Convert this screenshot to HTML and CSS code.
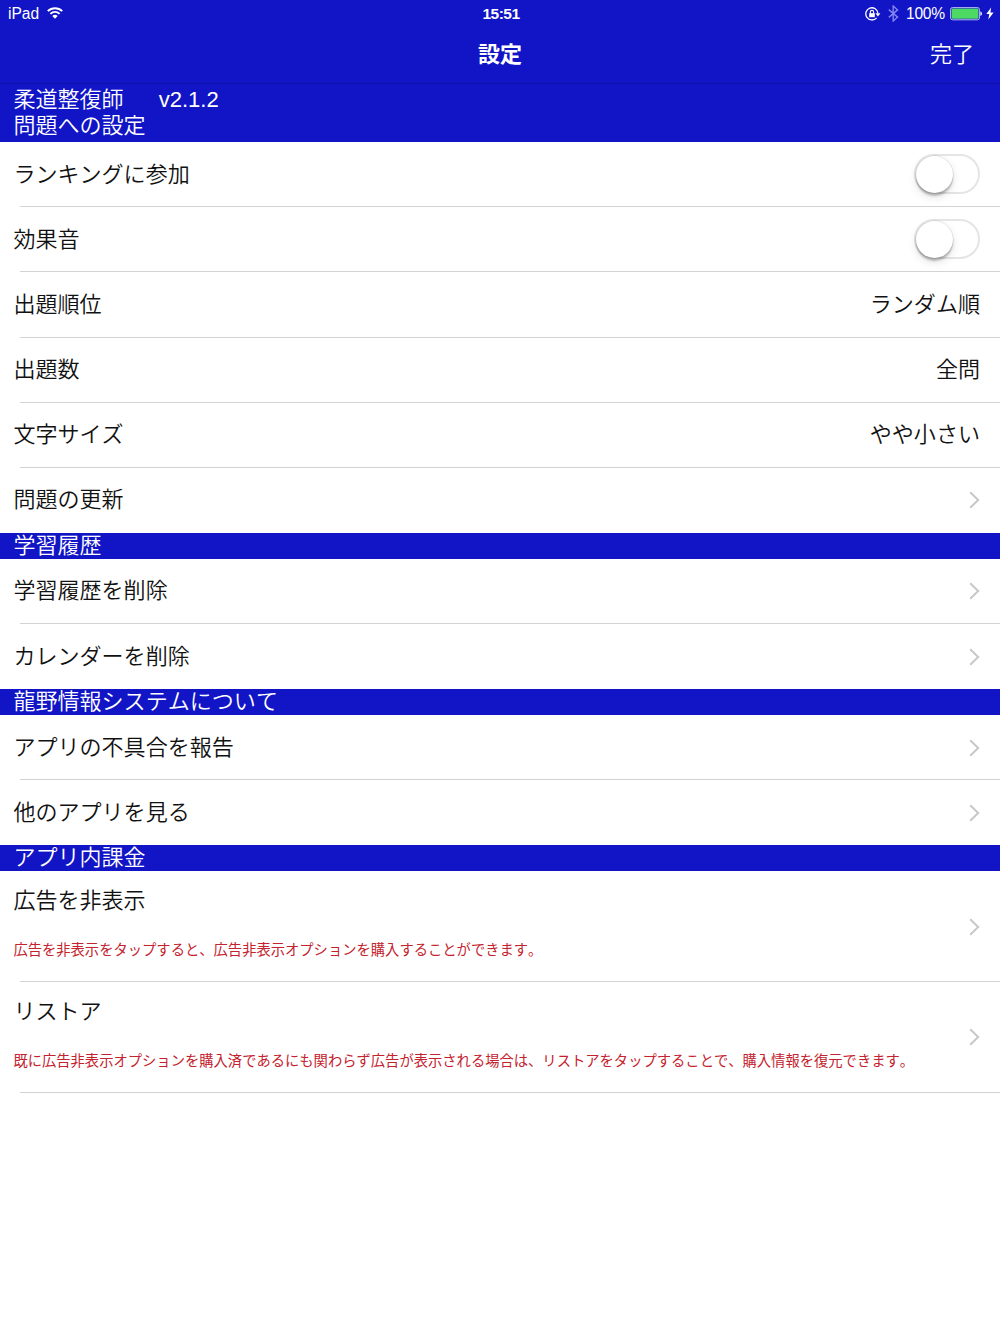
FILE: index.html
```html
<!DOCTYPE html>
<html lang="ja">
<head>
  <meta charset="UTF-8" />
  <meta name="viewport" content="width=device-width, initial-scale=1.0"/>
  <title>設定</title>
  <link rel="stylesheet" href="styles.css">
</head>
<body>

<!-- Status bar + navigation -->
<header class="top">
  <div class="status">
    <div class="status-left">
      <span>iPad</span>
      <svg class="wifi" width="16" height="12" viewBox="0 0 16 12" fill="none" stroke="#fff" stroke-width="1.9">
        <path d="M.8 4.2a10.2 10.2 0 0 1 14.4 0"/>
        <path d="M3.4 6.8a6.5 6.5 0 0 1 9.2 0"/>
        <path d="M8 11.8 5.3 9.1a3.8 3.8 0 0 1 5.4 0z" fill="#fff" stroke="none"/>
      </svg>
    </div>
    <div class="clock">15:51</div>
    <div class="status-right">
      <svg width="16" height="14" viewBox="0 0 16 14">
        <path d="M11.6 10.8A6.1 6.1 0 1 1 13 6.3" fill="none" stroke="#fff" stroke-width="1.3"/>
        <path d="M10.4 6.3h5L12.9 9.6z" fill="#fff"/>
        <rect x="4.2" y="6.2" width="5.6" height="4" fill="#fff"/>
        <path d="M5.4 6.4V5a1.6 1.6 0 0 1 3.2 0v1.4" fill="none" stroke="#fff" stroke-width="1.1"/>
      </svg>
      <svg class="bluetooth" width="11" height="17" viewBox="0 0 11 17">
        <path d="M.8 4.6 9.6 12.1 5.2 16V1l4.4 3.9L.8 12.4" fill="none" stroke="#8383ee" stroke-width="1.4"/>
      </svg>
      <span class="percent">100%</span>
      <svg class="battery" width="33" height="14" viewBox="0 0 33 14">
        <rect x=".6" y=".6" width="28.8" height="12.2" rx="1.8" fill="none" stroke="#b8b8f3" stroke-width="1"/>
        <rect x="1.6" y="1.6" width="26.8" height="10.2" rx=".8" fill="#4cd964"/>
        <path d="M30.4 4.5c2 .6 2 3.8 0 4.4z" fill="#fff"/>
      </svg>
      <svg class="bolt" width="8" height="13" viewBox="0 0 8 13">
        <path d="M5.2.4.3 7.1h3L2.3 12.6 7.6 5.4H4.4z" fill="#fff"/>
      </svg>
    </div>
  </div>
  <nav class="navbar">
    <h1>設定</h1>
    <a class="done">完了</a>
  </nav>
</header>

<main>
  <!-- Question settings -->
  <h2 class="section section-first">柔道整復師<span class="version">v2.1.2</span><br>問題への設定</h2>
  <ul class="list">
    <li class="row"><span>ランキングに参加</span><span class="switch"></span></li>
    <li class="row"><span>効果音</span><span class="switch"></span></li>
    <li class="row"><span>出題順位</span><span>ランダム順</span></li>
    <li class="row"><span>出題数</span><span>全問</span></li>
    <li class="row"><span>文字サイズ</span><span>やや小さい</span></li>
    <li class="row"><span>問題の更新</span><svg class="arrow" viewBox="0 0 11 18"><path d="M1.2 1.2 9.2 9l-8 7.8"/></svg></li>
  </ul>

  <!-- History -->
  <h2 class="section">学習履歴</h2>
  <ul class="list">
    <li class="row"><span>学習履歴を削除</span><svg class="arrow" viewBox="0 0 11 18"><path d="M1.2 1.2 9.2 9l-8 7.8"/></svg></li>
    <li class="row"><span>カレンダーを削除</span><svg class="arrow" viewBox="0 0 11 18"><path d="M1.2 1.2 9.2 9l-8 7.8"/></svg></li>
  </ul>

  <!-- About -->
  <h2 class="section">龍野情報システムについて</h2>
  <ul class="list">
    <li class="row"><span>アプリの不具合を報告</span><svg class="arrow" viewBox="0 0 11 18"><path d="M1.2 1.2 9.2 9l-8 7.8"/></svg></li>
    <li class="row"><span>他のアプリを見る</span><svg class="arrow" viewBox="0 0 11 18"><path d="M1.2 1.2 9.2 9l-8 7.8"/></svg></li>
  </ul>

  <!-- In-app purchase -->
  <h2 class="section">アプリ内課金</h2>
  <ul class="list list-last">
    <li class="row row-tall">
      <div>
        <p class="label">広告を非表示</p>
        <p class="note">広告を非表示をタップすると、広告非表示オプションを購入することができます。</p>
      </div>
      <svg class="arrow" viewBox="0 0 11 18"><path d="M1.2 1.2 9.2 9l-8 7.8"/></svg>
    </li>
    <li class="row row-tall">
      <div>
        <p class="label">リストア</p>
        <p class="note">既に広告非表示オプションを購入済であるにも関わらず広告が表示される場合は、リストアをタップすることで、購入情報を復元できます。</p>
      </div>
      <svg class="arrow" viewBox="0 0 11 18"><path d="M1.2 1.2 9.2 9l-8 7.8"/></svg>
    </li>
  </ul>
</main>

</body>
</html>
```

FILE: styles.css
```css
* {
  box-sizing: border-box;
}

body {
  margin: 0;
  background: #fff;
  color: #111;
  font-family: "Liberation Sans", "Noto Sans CJK JP", sans-serif;
  font-size: 22.05px;
  font-weight: 350;
  font-kerning: none;
}

h1, h2, p, ul {
  margin: 0;
  padding: 0;
}

/* Top bars */
.top {
  height: 84px;
  background: #1115c6;
  border-bottom: 1px solid #0f11aa;
  color: #fff;
}

.status {
  display: grid;
  grid-template-columns: 1fr auto 1fr;
  align-items: center;
  height: 27px;
  padding: 0 6px 0 8px;
  font-size: 15.6px;
}

.status-left,
.status-right {
  display: flex;
  align-items: center;
}

.status-right {
  justify-content: flex-end;
}

.wifi {
  margin-left: 8px;
  margin-bottom: 1px;
}

.clock {
  font-size: 15.5px;
  font-weight: bold;
  letter-spacing: -.5px;
}

.bluetooth {
  margin-left: 7px;
}

.percent {
  margin-left: 7px;
  letter-spacing: -.2px;
}

.battery {
  margin-left: 5px;
}

.bolt {
  margin-left: 3px;
}

.navbar {
  display: grid;
  grid-template-columns: 1fr auto 1fr;
  align-items: center;
  height: 50px;
  padding-right: 26px;
  padding-left: 26px;
}

.navbar h1 {
  grid-column: 2;
  font-size: 22px;
  font-weight: bold;
}

.done {
  justify-self: end;
}

/* Section headers */
.section {
  height: 26px;
  padding-left: 13.4px;
  background: #1115c6;
  color: #fff;
  font-size: 22.05px;
  font-weight: 350;
  line-height: 26px;
}

.section-first {
  height: 58.3px;
  padding-top: 3px;
}

.version {
  margin-left: 35px;
}

/* Rows */
.list {
  list-style: none;
}

.row {
  display: flex;
  align-items: center;
  justify-content: space-between;
  height: 65.1px;
  padding: 0 20px 0 13.4px;
  background: linear-gradient(#d3d3d6, #d3d3d6) 20px 100% / 100% 1px no-repeat;
  line-height: 26px;
}

.row:last-child {
  background: none;
}

.row-tall,
.list-last .row:last-child {
  height: 110.7px;
  background: linear-gradient(#d3d3d6, #d3d3d6) 20px 100% / 100% 1px no-repeat;
}

.row-tall div {
  padding-bottom: 5px;
}

.label {
  line-height: 30px;
}

.note {
  margin-top: 22px;
  color: #c4222e;
  font-size: 14.3px;
  font-weight: 400;
  line-height: 24px;
}

.arrow {
  width: 11px;
  height: 18px;
  fill: none;
  stroke: #c7c7cc;
  stroke-width: 2;
}

.switch {
  width: 66px;
  height: 40px;
  margin-bottom: 2px;
  border: 2px solid #e5e5e5;
  border-radius: 20px;
}

.switch::before {
  content: "";
  display: block;
  width: 37px;
  height: 37px;
  border-radius: 50%;
  background: #fff;
  box-shadow: 0 0 0 .5px rgba(0, 0, 0, .12), 0 3px 2px rgba(0, 0, 0, .22), 0 4px 10px rgba(0, 0, 0, .12);
}
```
